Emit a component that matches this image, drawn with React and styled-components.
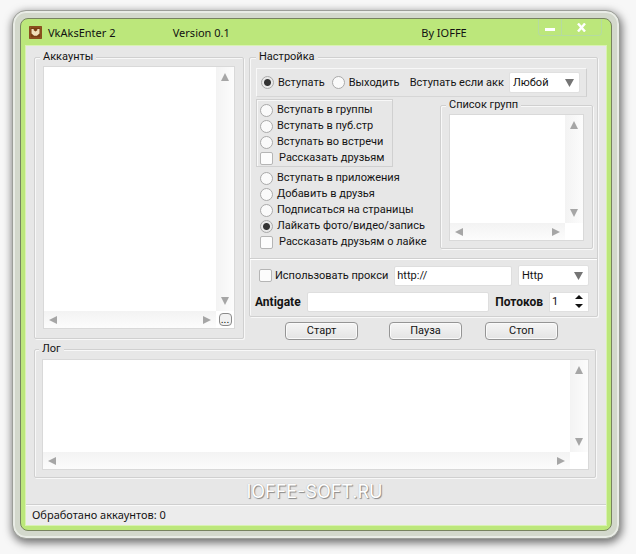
import React from "react";
import styled, { createGlobalStyle } from "styled-components";

const Global = createGlobalStyle`
  *, *::before, *::after { box-sizing: border-box; }
  body {
    margin: 0;
    background: #f7f7f7;
    color: #141414;
    font: 11px/16px Roboto, "Liberation Sans", sans-serif;
  }
  button, input, select, textarea { font: inherit; color: inherit; margin: 0; }
`;

const Frame = styled.div`
  margin: 10px 16px 16px 12px;
  padding: 7px;
  border: 1px solid #9c9e99;
  border-radius: 14px;
  background: #d3d8cc;
  box-shadow: inset 0 0 0 2px #e9ece6, 1px 3px 8px 1px rgba(0, 0, 0, 0.55);
`;

const Window = styled.main`
  padding: 0 5px 5px;
  border: 1px solid #77835f;
  border-radius: 8px;
  background: #bce77b;
`;

const TitleBar = styled.header`
  display: flex;
  align-items: center;
  height: 27px;
  padding-left: 3px;
  font: 11px/16px "Noto Sans", "Open Sans", sans-serif;
  color: #111;
`;

const TitleTexts = styled.div`
  flex: 1;
  display: grid;
  grid-template-columns: 125fr 249fr 117fr;
  margin-left: 6px;
  white-space: nowrap;
`;

const AppName = styled.h1`
  margin: 0;
  font: inherit;
`;

const WindowButtons = styled.div`
  display: flex;
  align-self: flex-start;
  width: 64px;
  height: 17px;
  margin-right: 4px;
  border: 1px solid #b5dba0;
  border-top: 0;
  border-radius: 0 0 4px 4px;
`;

const WindowButton = styled.button`
  flex: ${(p) => p.$grow} 0 0;
  display: grid;
  place-items: center;
  padding: 0;
  border: 0;
  background: none;

  & + & { border-left: 1px solid #b5dba0; }
`;

const Client = styled.div`
  padding: 3px 8px 0;
  background: #e7e7e7;
  box-shadow: 0 0 0 1px #d9f2b2;
`;

const Columns = styled.div`
  display: grid;
  grid-template-columns: minmax(0, 210fr) minmax(0, 349fr);
  gap: 5px;
`;

const Column = styled.div`
  display: flex;
  flex-direction: column;
  min-width: 0;
`;

const Group = styled.fieldset`
  display: flex;
  flex-direction: column;
  min-width: 0;
  margin: 0;
  padding: ${(p) => p.$pad};
  border: 1px solid #d0d0d0;
  border-radius: 2px;
  box-shadow: inset 1px 1px 0 #f8f8f8, 1px 1px 0 #f8f8f8;
`;

const GroupTitle = styled.legend`
  height: 16px;
  margin-left: ${(p) => (p.$indented ? 6 : -3)}px;
  padding: 0 3px;
  background: #e7e7e7;
`;

const ListFrame = styled.div`
  display: grid;
  grid-template-columns: minmax(0, 1fr) 18px;
  grid-template-rows: ${(p) => p.$rows}px 17px;
  background: #fff;
  border: 1px solid #d9d9d9;
`;

const ListText = styled.textarea`
  width: 100%;
  height: 100%;
  padding: 2px;
  border: 0;
  outline: 0;
  resize: none;
  background: none;
  overflow: hidden;
`;

const Track = styled.div`
  display: flex;
  flex-direction: ${(p) => (p.$vertical ? "column" : "row")};
  justify-content: space-between;
  align-items: center;
  padding: ${(p) => (p.$vertical ? "4px 0" : "0 3px")};
  background: linear-gradient(${(p) => (p.$vertical ? "to right" : "to bottom")}, #f3f3f3, #fcfcfc);
`;

const ArrowButton = styled.button`
  display: grid;
  place-items: center;
  width: 12px;
  height: 12px;
  padding: 0;
  border: 0;
  background: none;
  color: #a6a6a6;
`;

const BrowseButton = styled.button`
  place-self: center;
  width: 13px;
  height: 13px;
  padding: 0;
  border: 1px solid #8a8a8a;
  border-radius: 4px;
  background: #f1f1f1;
  line-height: 8px;
`;

const ModePanel = styled.div`
  display: flex;
  align-items: center;
  height: 29px;
  margin: 0 10px 0 6px;
  padding: 0 6px 0 4px;
  border: 1px solid #f8f8f8;
  border-right-color: #cfcfcf;
  border-bottom-color: #d6d6d6;
  white-space: nowrap;
`;

const Choice = styled.label`
  display: flex;
  align-items: center;
  gap: ${(p) => (p.$box ? 6 : 4)}px;
  height: 16px;
  margin-right: ${(p) => (p.$apart ? 7 : 0)}px;
  white-space: nowrap;
`;

const Radio = styled.input.attrs({ type: "radio" })`
  appearance: none;
  flex: none;
  width: 13px;
  height: 13px;
  border: 1px solid #a9a9a9;
  border-radius: 50%;
  background: #fafafa;

  &:checked { background: radial-gradient(circle, #333 0 3px, #e9e9e9 4px); }
`;

const Check = styled.input.attrs({ type: "checkbox" })`
  appearance: none;
  flex: none;
  width: 13px;
  height: 13px;
  border: 1px solid #b5b5b5;
  border-radius: 2px;
  background: #fcfcfc;
`;

const SelectLabel = styled.label`
  flex: 1;
  display: flex;
  align-items: center;
  justify-content: flex-end;
  gap: 5px;
`;

const SelectBox = styled.span`
  display: grid;
  grid-template-columns: 1fr 14px;
  align-items: center;
  width: 71px;
  height: 21px;
  background: #fff;
  border: 1px solid #e0e0e0;
  border-radius: 2px;
  color: #757575;
`;

const Select = styled.select`
  grid-area: 1 / 1 / 2 / 3;
  width: 100%;
  height: 19px;
  padding: 0 3px;
  border: 0;
  appearance: none;
  background: none;
  color: #111;
`;

const SelectArrow = styled.span`
  grid-area: 1 / 2;
  display: grid;
  place-items: center start;
  pointer-events: none;
`;

const Middle = styled.div`
  display: flex;
  justify-content: space-between;
  padding: 2px 4px 7px 6px;
`;

const Options = styled.div`
  display: flex;
  flex-direction: column;
`;

const OptionBlock = styled.div`
  width: 137px;
  padding: 2px 3px 0;
  border: 1px solid ${(p) => (p.$framed ? "#d0d0d0" : "transparent")};
  box-shadow: ${(p) => (p.$framed ? "inset 1px 1px 0 #f8f8f8" : "none")};
`;

const GroupsSide = styled.div`
  width: 153px;
  margin-top: -2px;
`;

const Network = styled.div`
  display: flex;
  flex-direction: column;
  gap: 5px;
  padding: 6px 8px 4px 5px;
  border-top: 1px solid #cfcfcf;
  box-shadow: inset 0 1px 0 #fff;
`;

const NetworkRow = styled.div`
  display: flex;
  align-items: center;
  gap: 6px;
  height: 21px;
`;

const ProxyChoice = styled(Choice)`
  gap: 3px;
  margin-left: 4px;
`;

const TextField = styled.input`
  flex: 1;
  min-width: 0;
  height: 20px;
  padding: 0 2px;
  border: 1px solid #dedede;
  border-radius: 2px;
  background: #fff;
  outline: 0;
`;

const FieldName = styled.label`
  font-weight: 700;
  font-size: 12px;
`;

const Spinner = styled.div`
  display: flex;
  width: 40px;
  height: 20px;
  background: #fff;
  border: 1px solid #e0e0e0;
  color: #111;
`;

const SpinnerValue = styled.input`
  flex: 1;
  min-width: 0;
  padding: 0 2px;
  border: 0;
  background: none;
  outline: 0;
`;

const SpinnerButtons = styled.div`
  display: grid;
  width: 18px;
`;

const SpinButton = styled.button`
  display: grid;
  place-items: center;
  padding: 0;
  border: 0;
  background: none;
`;

const Actions = styled.div`
  display: flex;
  padding: 5px 40px 0 36px;
  justify-content: space-between;
`;

const ActionPair = styled.div`
  display: flex;
  gap: 31px;
`;

const ActionButton = styled.button`
  width: 73px;
  height: 18px;
  padding: 0;
  border: 1px solid #959595;
  border-radius: 4px;
  background: linear-gradient(#f5f5f5, #e4e4e4);
  box-shadow: inset 0 0 0 1px #fafafa;
  line-height: 14px;
`;

const LogArea = styled.div`
  padding: 1px 2px 0 0;
`;

const Brand = styled.div`
  height: 26px;
  padding-right: 3px;
  text-align: center;
  font: 18px/28px Inter, "Liberation Sans", sans-serif;
  color: #fff;
  text-shadow: 1px 1px 1px #888, 0 0 1px #aaa;
`;

const StatusBar = styled.footer`
  height: 21px;
  margin: 0 -8px;
  padding: 0 6px;
  border-top: 1px solid #cfcfcf;
  box-shadow: inset 0 1px 0 #fafafa;
  background: #ececec;
  font: 11px/19px "Noto Sans", "Open Sans", sans-serif;
`;

const shapes = {
  up: "4,0 8,8 0,8",
  down: "0,0 8,0 4,8",
  left: "8,0 8,8 0,4",
  right: "0,0 8,4 0,8",
};

function Triangle({ dir, width = 8, height = 8 }) {
  return (
    <svg width={width} height={height} viewBox="0 0 8 8" preserveAspectRatio="none" aria-hidden="true">
      <polygon points={shapes[dir]} fill="currentColor" />
    </svg>
  );
}

function ListBox({ label, rows, corner }) {
  return (
    <ListFrame $rows={rows}>
      <ListText aria-label={label} />
      <Track $vertical>
        <ArrowButton aria-label="Вверх"><Triangle dir="up" /></ArrowButton>
        <ArrowButton aria-label="Вниз"><Triangle dir="down" /></ArrowButton>
      </Track>
      <Track>
        <ArrowButton aria-label="Влево"><Triangle dir="left" /></ArrowButton>
        <ArrowButton aria-label="Вправо"><Triangle dir="right" /></ArrowButton>
      </Track>
      {corner}
    </ListFrame>
  );
}

function DropDown({ id, label, options }) {
  return (
    <SelectBox>
      <Select id={id} aria-label={label}>
        {options.map((o) => <option key={o}>{o}</option>)}
      </Select>
      <SelectArrow><Triangle dir="down" width={9} /></SelectArrow>
    </SelectBox>
  );
}

function RadioChoice({ name, text, checked, apart }) {
  return (
    <Choice $apart={apart}>
      <Radio name={name} defaultChecked={checked} />
      {text}
    </Choice>
  );
}

function Logo() {
  return (
    <svg width="13" height="13" viewBox="0 0 13 13" aria-hidden="true">
      <rect width="13" height="13" rx="1" fill="#783d12" />
      <rect x="1" y="1" width="11" height="11" fill="none" stroke="#9a602b" />
      <path d="M2.5 3h2.2v1.2l1.8 1.4 1.8-1.4V3h2.2v4.6l-2.6 2.2H5.1L2.500 7.600z" fill="#f0dfba" />
    </svg>
  );
}

export default function App() {
  return (
    <>
      <Global />
      <Frame>
        <Window>
          <TitleBar>
            <Logo />
            <TitleTexts>
              <AppName>VkAksEnter 2</AppName>
              <span>Version 0.1</span>
              <span>By IOFFE</span>
            </TitleTexts>
            <WindowButtons>
              <WindowButton $grow={23} aria-label="Свернуть">
                <svg width="10" height="10" viewBox="0 0 10 10"><path d="M0 6h10v3H0z" fill="#fff" /></svg>
              </WindowButton>
              <WindowButton $grow={40} aria-label="Закрыть">
                <svg width="9" height="9" viewBox="0 0 9 9"><path d="M1 0.5l7 8M8 0.5l-7 8" stroke="#fff" strokeWidth="2.4" /></svg>
              </WindowButton>
            </WindowButtons>
          </TitleBar>
          <Client>
            <Columns>
              <Column>
                <Group $pad="1px 8px 9px 8px">
                  <GroupTitle>Аккаунты</GroupTitle>
                  <ListBox
                    label="Аккаунты"
                    rows={244}
                    corner={<BrowseButton aria-label="Обзор">...</BrowseButton>}
                  />
                </Group>
              </Column>
              <Column>
                <Group $pad="3px 0 0">
                  <GroupTitle $indented>Настройка</GroupTitle>
                  <ModePanel>
                    <RadioChoice name="mode" text="Вступать" checked apart />
                    <RadioChoice name="mode" text="Выходить" />
                    <SelectLabel htmlFor="account">
                      Вступать если акк
                      <DropDown id="account" options={["Любой"]} />
                    </SelectLabel>
                  </ModePanel>
                  <Middle>
                    <Options>
                      <OptionBlock $framed>
                        <RadioChoice name="action" text="Вступать в группы" />
                        <RadioChoice name="action" text="Вступать в пуб.стр" />
                        <RadioChoice name="action" text="Вступать во встречи" />
                        <Choice $box><Check />Рассказать друзьям</Choice>
                      </OptionBlock>
                      <OptionBlock>
                        <RadioChoice name="action" text="Вступать в приложения" />
                        <RadioChoice name="action" text="Добавить в друзья" />
                        <RadioChoice name="action" text="Подписаться на страницы" />
                        <RadioChoice name="action" text="Лайкать фото/видео/запись" checked />
                        <Choice $box><Check />Рассказать друзьям о лайке</Choice>
                      </OptionBlock>
                    </Options>
                    <GroupsSide>
                      <Group $pad="1px 8px 7px">
                        <GroupTitle>Список групп</GroupTitle>
                        <ListBox label="Список групп" rows={108} corner={null} />
                      </Group>
                    </GroupsSide>
                  </Middle>
                  <Network>
                    <NetworkRow>
                      <ProxyChoice><Check />Использовать прокси</ProxyChoice>
                      <TextField aria-label="Адрес прокси" defaultValue="http://" />
                      <DropDown label="Тип прокси" options={["Http"]} />
                    </NetworkRow>
                    <NetworkRow>
                      <FieldName htmlFor="antigate">Antigate</FieldName>
                      <TextField id="antigate" />
                      <FieldName htmlFor="threads">Потоков</FieldName>
                      <Spinner>
                        <SpinnerValue id="threads" defaultValue="1" />
                        <SpinnerButtons>
                          <SpinButton aria-label="Больше"><Triangle dir="up" height={4} /></SpinButton>
                          <SpinButton aria-label="Меньше"><Triangle dir="down" height={4} /></SpinButton>
                        </SpinnerButtons>
                      </Spinner>
                    </NetworkRow>
                  </Network>
                </Group>
                <Actions>
                  <ActionPair>
                    <ActionButton>Старт</ActionButton>
                    <ActionButton>Пауза</ActionButton>
                  </ActionPair>
                  <ActionButton>Стоп</ActionButton>
                </Actions>
              </Column>
            </Columns>
            <LogArea>
              <Group $pad="2px 6px 7px 7px">
                <GroupTitle>Лог</GroupTitle>
                <ListBox label="Лог" rows={92} corner={null} />
              </Group>
            </LogArea>
            <Brand>IOFFE-SOFT.RU</Brand>
            <StatusBar>Обработано аккаунтов: 0</StatusBar>
          </Client>
        </Window>
      </Frame>
    </>
  );
}
